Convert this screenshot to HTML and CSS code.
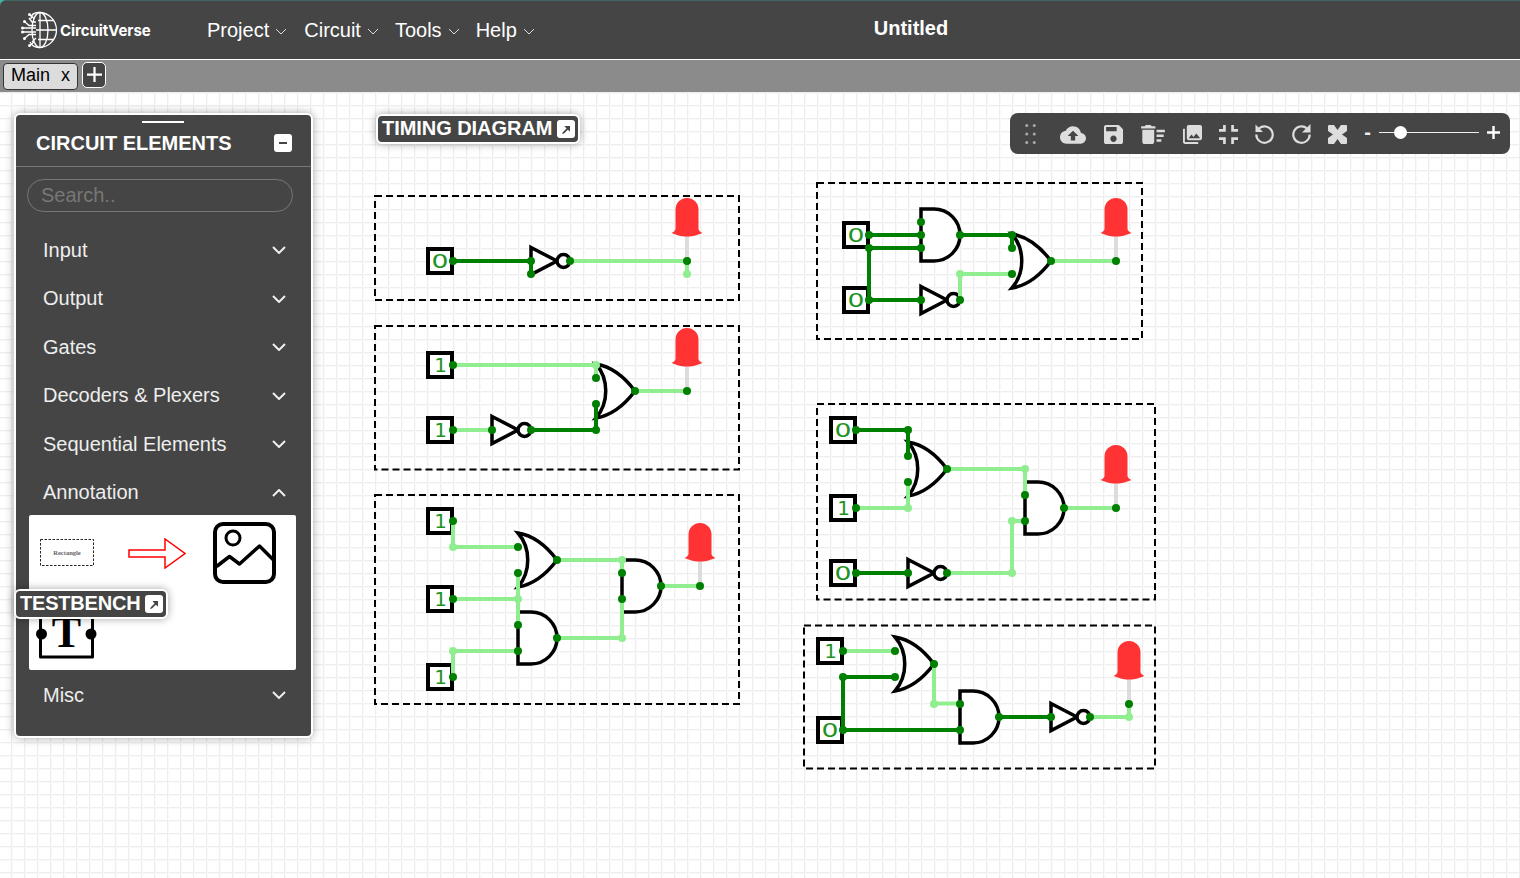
FILE: index.html
```html
<!DOCTYPE html>
<html lang="en">
<head>
<meta charset="utf-8">
<title>CircuitVerse Simulator</title>
<link rel="stylesheet" href="styles.css">
</head>
<body>
<div class="app">
  <header class="topbar">
    <div class="brand">
      <svg class="brand-mark" viewBox="0 0 37 38" aria-hidden="true">
        <g class="logo-line">
          <path d="M18 1.500A17.500 17.500 0 1 1 18 36.500"/>
          <path d="M18 1.500C10 1.500 10 6 10 8M18 36.500C12 36.500 10 33 9 31"/>
          <ellipse cx="19" cy="19" rx="8" ry="17.500"/>
          <path d="M19 1.500V36.500M17 9.500H33M15 19H36M17 28.500H33"/>
          <path d="M15 14.500H8L4 11M15 17H2M15 21H2M15 23.500H8L4 27M13 7.500L9 3.500M13 31L9 34.500M15 27L11 31M15 11H11L8 7"/>
        </g>
        <g class="logo-dot">
          <circle cx="3.500" cy="10.500" r="1.500"/><circle cx="1.500" cy="17" r="1.500"/><circle cx="1.500" cy="21" r="1.500"/><circle cx="3.500" cy="27.500" r="1.500"/><circle cx="8.500" cy="3.500" r="1.500"/><circle cx="8.500" cy="34.500" r="1.500"/>
        </g>
      </svg>
      <span class="brand-name">CircuitVerse</span>
    </div>
    <nav class="menu">
      <span class="menu-item">Project <svg class="menu-chev" viewBox="0 0 12 7"><path d="M1 1l5 5 5-5"/></svg></span>
      <span class="menu-item">Circuit <svg class="menu-chev" viewBox="0 0 12 7"><path d="M1 1l5 5 5-5"/></svg></span>
      <span class="menu-item">Tools <svg class="menu-chev" viewBox="0 0 12 7"><path d="M1 1l5 5 5-5"/></svg></span>
      <span class="menu-item">Help <svg class="menu-chev" viewBox="0 0 12 7"><path d="M1 1l5 5 5-5"/></svg></span>
    </nav>
    <div class="project-title">Untitled</div>
  </header>

  <div class="tabbar">
    <div class="tab"><span>Main</span><span>x</span></div>
    <div class="tab-add"><svg viewBox="0 0 16 16"><path d="M8 0V16M0 8H16"/></svg></div>
  </div>

  <main class="canvas">
    <svg class="board" viewBox="0 92 1520 786" aria-label="Circuit diagram">
      <defs>
        <g id="led">
          <path class="led-stem" d="M0 0V-27"/>
          <path class="led-body" d="M-11.500 -32V-51.500A11.500 11.500 0 0 1 11.500 -51.500V-32C11.500 -30.500 13.500 -29 15.500 -28C8 -25 4 -24.500 0 -24.500C-4 -24.500 -8 -25 -15.500 -28C-13.500 -29 -11.500 -30.500 -11.500 -32Z"/>
        </g>
        <g id="not-gate">
          <path class="gate" d="M0 -13.500L26 0L0 13.500Z"/>
          <circle class="gate" cx="32.500" cy="0" r="6.500"/>
        </g>
        <path id="or-gate" class="gate" d="M0 -27C18 -24 30 -12 39 0C30 12 18 24 0 27C13 12 13 -12 0 -27Z"/>
        <path id="and-gate" class="gate" d="M0 -26H13A26 26 0 0 1 13 26H0Z"/>
      </defs>

      <!-- circuit 1 -->
      <rect class="frame" x="375" y="196" width="364" height="104"/>
      <rect class="input-box" x="428" y="249" width="24" height="24"/>
      <text class="input-val" x="440" y="268" textLength="17" lengthAdjust="spacingAndGlyphs">0</text>
      <use href="#not-gate" x="531" y="261"/>
      <use href="#led" x="687" y="261"/>
      <path class="w-on" d="M453 261H531V274"/>
      <path class="w-off" d="M570 261H687V274"/>
      <g class="n-on"><circle cx="453" cy="261" r="4"/><circle cx="531" cy="261" r="4"/><circle cx="531" cy="274" r="4"/><circle cx="570" cy="261" r="4"/><circle cx="687" cy="261" r="4"/></g>
      <g class="n-off"><circle cx="687" cy="274" r="4"/></g>

      <!-- circuit 2 -->
      <rect class="frame" x="375" y="326" width="364" height="143.500"/>
      <rect class="input-box" x="428" y="353" width="24" height="24"/>
      <text class="input-val" x="440.500" y="372">1</text>
      <rect class="input-box" x="428" y="418" width="24" height="24"/>
      <text class="input-val" x="440.500" y="437">1</text>
      <use href="#not-gate" x="492" y="430"/>
      <use href="#or-gate" x="596" y="391"/>
      <use href="#led" x="687" y="391"/>
      <path class="w-off" d="M453 365H596V378M453 430H492M635 391H687"/>
      <path class="w-on" d="M531 430H596V404"/>
      <g class="n-on"><circle cx="453" cy="365" r="4"/><circle cx="453" cy="430" r="4"/><circle cx="492" cy="430" r="4"/><circle cx="531" cy="430" r="4"/><circle cx="596" cy="430" r="4"/><circle cx="596" cy="404" r="4"/><circle cx="596" cy="378" r="4"/><circle cx="635" cy="391" r="4"/><circle cx="687" cy="391" r="4"/></g>
      <g class="n-off"><circle cx="596" cy="365" r="4"/></g>

      <!-- circuit 3 -->
      <rect class="frame" x="375" y="495" width="364" height="209"/>
      <rect class="input-box" x="428" y="509" width="24" height="24"/>
      <text class="input-val" x="440.500" y="528">1</text>
      <rect class="input-box" x="428" y="587" width="24" height="24"/>
      <text class="input-val" x="440.500" y="606">1</text>
      <rect class="input-box" x="428" y="665" width="24" height="24"/>
      <text class="input-val" x="440.500" y="684">1</text>
      <use href="#or-gate" x="518" y="560"/>
      <use href="#and-gate" x="518" y="638"/>
      <use href="#and-gate" x="622" y="586"/>
      <use href="#led" x="700" y="586"/>
      <path class="w-off" d="M453 521V547H518M453 599H518M518 573V625M453 677V651H518M557 560H622V573M622 599V638H557M661 586H700"/>
      <g class="n-on"><circle cx="453" cy="521" r="4"/><circle cx="453" cy="599" r="4"/><circle cx="453" cy="677" r="4"/><circle cx="518" cy="547" r="4"/><circle cx="518" cy="573" r="4"/><circle cx="518" cy="625" r="4"/><circle cx="518" cy="651" r="4"/><circle cx="557" cy="560" r="4"/><circle cx="557" cy="638" r="4"/><circle cx="622" cy="573" r="4"/><circle cx="622" cy="599" r="4"/><circle cx="661" cy="586" r="4"/><circle cx="700" cy="586" r="4"/></g>
      <g class="n-off"><circle cx="453" cy="547" r="4"/><circle cx="453" cy="651" r="4"/><circle cx="518" cy="599" r="4"/><circle cx="622" cy="560" r="4"/><circle cx="622" cy="638" r="4"/></g>

      <!-- circuit 4 -->
      <rect class="frame" x="817" y="183" width="325" height="156"/>
      <rect class="input-box" x="844" y="223" width="24" height="24"/>
      <text class="input-val" x="856" y="242" textLength="17" lengthAdjust="spacingAndGlyphs">0</text>
      <rect class="input-box" x="844" y="288" width="24" height="24"/>
      <text class="input-val" x="856" y="307" textLength="17" lengthAdjust="spacingAndGlyphs">0</text>
      <use href="#and-gate" x="921" y="235"/>
      <use href="#not-gate" x="921" y="300"/>
      <use href="#or-gate" x="1012" y="261"/>
      <use href="#led" x="1116" y="261"/>
      <path class="w-on" d="M869 235H921M869 248H921M869 248V300H921M960 235H1012V248"/>
      <path class="w-off" d="M960 300V274H1012M1051 261H1116"/>
      <g class="n-on"><circle cx="869" cy="235" r="4"/><circle cx="869" cy="248" r="4"/><circle cx="869" cy="300" r="4"/><circle cx="921" cy="222" r="4"/><circle cx="921" cy="235" r="4"/><circle cx="921" cy="248" r="4"/><circle cx="921" cy="300" r="4"/><circle cx="960" cy="235" r="4"/><circle cx="960" cy="300" r="4"/><circle cx="1012" cy="235" r="4"/><circle cx="1012" cy="248" r="4"/><circle cx="1012" cy="274" r="4"/><circle cx="1051" cy="261" r="4"/><circle cx="1116" cy="261" r="4"/></g>
      <g class="n-off"><circle cx="960" cy="274" r="4"/></g>

      <!-- circuit 5 -->
      <rect class="frame" x="817" y="404" width="338" height="195.500"/>
      <rect class="input-box" x="831" y="418" width="24" height="24"/>
      <text class="input-val" x="843" y="437" textLength="17" lengthAdjust="spacingAndGlyphs">0</text>
      <rect class="input-box" x="831" y="496" width="24" height="24"/>
      <text class="input-val" x="843.500" y="515">1</text>
      <rect class="input-box" x="831" y="561" width="24" height="24"/>
      <text class="input-val" x="843" y="580" textLength="17" lengthAdjust="spacingAndGlyphs">0</text>
      <use href="#or-gate" x="908" y="469"/>
      <use href="#and-gate" x="1025" y="508"/>
      <use href="#not-gate" x="908" y="573"/>
      <use href="#led" x="1116" y="508"/>
      <path class="w-on" d="M856 430H908V456M856 573H908"/>
      <path class="w-off" d="M856 508H908V482M947 469H1025V495M947 573H1012V521H1025M1064 508H1116"/>
      <g class="n-on"><circle cx="856" cy="430" r="4"/><circle cx="856" cy="508" r="4"/><circle cx="856" cy="573" r="4"/><circle cx="908" cy="430" r="4"/><circle cx="908" cy="456" r="4"/><circle cx="908" cy="482" r="4"/><circle cx="908" cy="573" r="4"/><circle cx="947" cy="469" r="4"/><circle cx="947" cy="573" r="4"/><circle cx="1025" cy="495" r="4"/><circle cx="1025" cy="521" r="4"/><circle cx="1064" cy="508" r="4"/><circle cx="1116" cy="508" r="4"/></g>
      <g class="n-off"><circle cx="908" cy="508" r="4"/><circle cx="1025" cy="469" r="4"/><circle cx="1012" cy="573" r="4"/><circle cx="1012" cy="521" r="4"/></g>

      <!-- circuit 6 -->
      <rect class="frame" x="804" y="625.500" width="351" height="143"/>
      <rect class="input-box" x="818" y="639" width="24" height="24"/>
      <text class="input-val" x="830.500" y="658">1</text>
      <rect class="input-box" x="818" y="718" width="24" height="24"/>
      <text class="input-val" x="830" y="737" textLength="17" lengthAdjust="spacingAndGlyphs">0</text>
      <use href="#or-gate" x="895" y="664"/>
      <use href="#and-gate" x="960" y="717"/>
      <use href="#not-gate" x="1051" y="717"/>
      <use href="#led" x="1129" y="704"/>
      <path class="w-on" d="M895 677H843V730H960M999 717H1051"/>
      <path class="w-off" d="M843 651H895M934 664V703.500H960M1090 717H1129V704"/>
      <g class="n-on"><circle cx="843" cy="651" r="4"/><circle cx="843" cy="677" r="4"/><circle cx="843" cy="730" r="4"/><circle cx="895" cy="651" r="4"/><circle cx="895" cy="677" r="4"/><circle cx="934" cy="664" r="4"/><circle cx="960" cy="704" r="4"/><circle cx="960" cy="730" r="4"/><circle cx="999" cy="717" r="4"/><circle cx="1051" cy="717" r="4"/><circle cx="1090" cy="717" r="4"/><circle cx="1129" cy="704" r="4"/></g>
      <g class="n-off"><circle cx="934" cy="704" r="4"/><circle cx="1129" cy="717" r="4"/></g>
    </svg>

    <aside class="elements-panel">
      <div class="drag-handle"></div>
      <div class="panel-head">
        <span class="panel-title">CIRCUIT ELEMENTS</span>
        <span class="minimize"></span>
      </div>
      <div class="search">Search..</div>
      <div class="row"><span>Input</span><svg class="chev" viewBox="0 0 14 8"><path d="M1 1l6 6 6-6"/></svg></div>
      <div class="row"><span>Output</span><svg class="chev" viewBox="0 0 14 8"><path d="M1 1l6 6 6-6"/></svg></div>
      <div class="row"><span>Gates</span><svg class="chev" viewBox="0 0 14 8"><path d="M1 1l6 6 6-6"/></svg></div>
      <div class="row"><span>Decoders &amp; Plexers</span><svg class="chev" viewBox="0 0 14 8"><path d="M1 1l6 6 6-6"/></svg></div>
      <div class="row"><span>Sequential Elements</span><svg class="chev" viewBox="0 0 14 8"><path d="M1 1l6 6 6-6"/></svg></div>
      <div class="row"><span>Annotation</span><svg class="chev" viewBox="0 0 14 8"><path d="M1 7l6-6 6 6"/></svg></div>
      <div class="annotation-grid">
        <svg class="ann-rect" viewBox="0 0 54 27">
          <rect class="ann-dash" x="0.500" y="0.500" width="53" height="26"/>
          <text class="ann-label" x="27" y="15.500">Rectangle</text>
        </svg>
        <svg class="ann-arrow" viewBox="0 0 58 31">
          <path class="ann-red" d="M1 12H37V1L57 15.500L37 30V19H1Z"/>
        </svg>
        <svg class="ann-image" viewBox="0 0 63 62">
          <rect class="ann-black" x="2" y="2" width="59" height="58" rx="8"/>
          <circle class="ann-black ann-thin" cx="20" cy="16" r="7"/>
          <path class="ann-black ann-mid" d="M3.500 44.500L16.500 34.500L26.500 42L46.500 24L60.500 38"/>
        </svg>
        <svg class="ann-text" viewBox="0 0 56 54">
          <path class="ann-black ann-thin" d="M2.500 0V52H54.500V0"/>
          <circle cx="3.500" cy="29" r="5.500"/><circle cx="53" cy="29" r="5.500"/>
          <text class="ann-t" x="28.500" y="42">T</text>
        </svg>
      </div>
      <div class="row row-last"><span>Misc</span><svg class="chev" viewBox="0 0 14 8"><path d="M1 1l6 6 6-6"/></svg></div>
    </aside>

    <div class="chip chip-timing">
      <span>TIMING DIAGRAM</span>
      <svg class="chip-icon" viewBox="0 0 18 18"><rect width="18" height="18" rx="3"/><path d="M5 14L6 12L9.500 8.500L7.500 6H13V11.500L10.800 9.800L7 13.500Z"/></svg>
    </div>
    <div class="chip chip-testbench">
      <span>TESTBENCH</span>
      <svg class="chip-icon" viewBox="0 0 18 18"><rect width="18" height="18" rx="3"/><path d="M5 14L6 12L9.500 8.500L7.500 6H13V11.500L10.800 9.800L7 13.500Z"/></svg>
    </div>

    <div class="toolbar">
      <svg class="grip" viewBox="0 0 10 20"><circle cx="1.500" cy="1.500" r="1.500"/><circle cx="9" cy="1.500" r="1.500"/><circle cx="1.500" cy="10" r="1.500"/><circle cx="9" cy="10" r="1.500"/><circle cx="1.500" cy="18.500" r="1.500"/><circle cx="9" cy="18.500" r="1.500"/></svg>
      <svg class="tool tool-cloud" viewBox="0 4 24 16"><path d="M19.350 10.040C18.670 6.590 15.640 4 12 4 9.110 4 6.600 5.640 5.350 8.040 2.340 8.360 0 10.910 0 14c0 3.310 2.690 6 6 6h13c2.760 0 5-2.240 5-5 0-2.640-2.050-4.780-4.650-4.960zM14 13v4h-4v-4H7l5-5 5 5h-3z"/></svg>
      <svg class="tool tool-19" viewBox="3 3 18 18"><path d="M17 3H5c-1.110 0-2 .9-2 2v14c0 1.100.89 2 2 2h14c1.100 0 2-.9 2-2V7l-4-4zm-5 16c-1.660 0-3-1.340-3-3s1.340-3 3-3 3 1.340 3 3-1.340 3-3 3zm3-10H5V5h10v4z"/></svg>
      <svg class="tool tool-sweep" viewBox="2 4 20 16"><path d="M15 16h4v2h-4zm0-8h7v2h-7zm0 4h6v2h-6zM3 18c0 1.100.9 2 2 2h6c1.100 0 2-.9 2-2V8H3v10zM14 5h-3l-1-1H6L5 5H2v2h12z"/></svg>
      <svg class="tool tool-19" viewBox="2 2 20 20"><path d="M22 16V4c0-1.100-.9-2-2-2H8c-1.100 0-2 .9-2 2v12c0 1.100.9 2 2 2h12c1.100 0 2-.9 2-2zm-11-4l2.030 2.710L16 11l4 5H8l3-4zM2 6v14c0 1.100.9 2 2 2h14v-2H4V6H2z"/></svg>
      <svg class="tool tool-19" viewBox="5 5 14 14"><path d="M5 16h3v3h2v-5H5v2zm3-8H5v2h5V5H8v3zm6 11h2v-3h3v-2h-5v5zm2-11V5h-2v5h5V8h-3z"/></svg>
      <svg class="tool tool-19 tool-tall" viewBox="0 0 19 20"><path class="ring" d="M4 4.500A8.200 8.200 0 1 1 1.300 10.500"/><path d="M0.500 0.500V8H8Z"/></svg>
      <svg class="tool tool-20 tool-tall" viewBox="0 0 20 20"><path class="ring" d="M16 4.500A8.200 8.200 0 1 0 18.700 10.500"/><path d="M19.500 0V8.500H11Z"/></svg>
      <svg class="tool tool-19" viewBox="0 0 19 19"><rect width="19" height="19" rx="1"/><path class="fit-notch" d="M6 0H13L9.500 5ZM6 19H13L9.500 14ZM0 6V13L5 9.500ZM19 6V13L14 9.500Z"/></svg>
      <span class="zoom-minus">-</span>
      <div class="slider"><span class="slider-thumb"></span></div>
      <svg class="zoom-plus" viewBox="0 0 13 13"><path d="M6.500 0V13M0 6.500H13"/></svg>
    </div>
  </main>
</div>
</body>
</html>
```

FILE: styles.css
```css
* { box-sizing: border-box; }

html, body {
  margin: 0;
  height: 100%;
  overflow: hidden;
}

body {
  font-family: "Liberation Sans", Arial, sans-serif;
  background: #42b8a4;
}

.app {
  display: flex;
  flex-direction: column;
  height: 878px;
}

/* header */
.topbar {
  display: flex;
  align-items: center;
  flex: none;
  height: 60px;
  padding-left: 21px;
  background: #454545;
  border-top: 1px solid #3f6663;
  border-bottom: 1px solid #fff;
  border-top-left-radius: 6px;
  color: #fff;
}

.brand {
  display: flex;
  align-items: center;
  gap: 2px;
}

.brand-mark {
  width: 37px;
  height: 38px;
}

.logo-line {
  fill: none;
  stroke: #fff;
  stroke-width: 1.3;
}

.logo-dot { fill: #fff; }

.brand-name {
  width: 91px;
  font-family: Inter, "Liberation Sans", sans-serif;
  font-size: 15px;
  font-weight: 700;
  letter-spacing: -0.05px;
  white-space: nowrap;
}

.menu {
  display: flex;
  gap: 16px;
  margin-left: 56px;
  font-size: 20px;
}

.menu-item {
  display: flex;
  align-items: center;
  gap: 6px;
}

.menu-item:first-child { margin-right: 1px; }

.menu-chev {
  width: 12px;
  height: 7px;
  margin-top: 3px;
  fill: none;
  stroke: #ddd;
  stroke-width: 1;
}

.project-title {
  margin: -3px 0 0 339px;
  font-size: 20px;
  font-weight: 700;
}

/* tabs */
.tabbar {
  display: flex;
  flex: none;
  align-items: flex-start;
  gap: 4px;
  height: 32px;
  padding: 2px 0 0 3px;
  background: #8b8b8b;
}

.tab {
  display: flex;
  justify-content: space-between;
  align-items: center;
  width: 75px;
  height: 27px;
  margin-top: 1px;
  padding: 0 7px 3px 7px;
  background: #dcdcdc;
  border: 1px solid #333;
  border-radius: 4px;
  font-size: 18px;
  color: #000;
}

.tab-add {
  display: flex;
  align-items: center;
  justify-content: center;
  width: 24px;
  height: 26px;
  padding-bottom: 2px;
  background: #454545;
  border: 1px solid #fff;
  border-radius: 5px;
}

.tab-add svg {
  width: 15px;
  height: 15px;
  fill: none;
  stroke: #fff;
  stroke-width: 2.4;
}

/* canvas */
.canvas {
  position: relative;
  flex: 1;
  background-color: #fff;
  background-image:
    linear-gradient(to right, #eee 0, #eee 1px, #f9f9f9 1px, #f9f9f9 2px, transparent 2px),
    linear-gradient(to bottom, #eee 0, #eee 1px, #f9f9f9 1px, #f9f9f9 2px, transparent 2px);
  background-size: 13px 13px;
  background-position: 11px 0;
}

.board {
  position: absolute;
  inset: 0;
  width: 1520px;
  height: 786px;
}

.frame {
  fill: none;
  stroke: #000;
  stroke-width: 2;
  stroke-dasharray: 7 4;
}

.gate {
  fill: #fff;
  stroke: #000;
  stroke-width: 3.5;
  stroke-linejoin: miter;
}

.input-box {
  fill: #fff;
  stroke: #000;
  stroke-width: 4;
}

.input-val {
  fill: #1f931f;
  font-family: "DejaVu Sans", sans-serif;
  font-size: 20px;
  text-anchor: middle;
}

.w-on, .w-off {
  fill: none;
  stroke-width: 4;
}

.w-on { stroke: #008000; }
.w-off { stroke: #90ee90; }
.n-on { fill: #008000; }
.n-off { fill: #90ee90; }

.led-stem {
  fill: none;
  stroke: #dcdcdc;
  stroke-width: 4;
}

.led-body { fill: #ff3333; }

/* elements panel */
.elements-panel {
  position: absolute;
  top: 21px;
  left: 14px;
  width: 299px;
  height: 625px;
  background: #454545;
  border: 2px solid #fff;
  border-radius: 6px;
  box-shadow: 0 0 10px rgba(0, 0, 0, 0.35);
  color: #eee;
}

.drag-handle {
  position: absolute;
  top: 6px;
  left: 126px;
  width: 42px;
  height: 2px;
  background: #fff;
}

.panel-head {
  display: flex;
  align-items: center;
  justify-content: space-between;
  height: 52px;
  padding: 6px 19px 0 20px;
  border-bottom: 1px solid #777;
}

.panel-title {
  font-size: 20px;
  font-weight: 700;
  color: #fff;
}

.minimize {
  display: flex;
  align-items: center;
  justify-content: center;
  width: 18px;
  height: 18px;
  margin-top: -2px;
  background: #fff;
  border-radius: 3px;
}

.minimize::before {
  content: "";
  width: 8px;
  height: 2px;
  background: #454545;
}

.search {
  display: flex;
  align-items: center;
  height: 33px;
  margin: 12px 18px 14px 11px;
  padding-left: 13px;
  border: 1px solid #777;
  border-radius: 17px;
  font-size: 20px;
  color: #777;
}

.row {
  display: flex;
  align-items: center;
  justify-content: space-between;
  height: 48.5px;
  padding: 0 25px 0 27px;
  font-size: 20px;
}

.row-last { margin-top: 1px; }

.chev {
  width: 14px;
  height: 8px;
  fill: none;
  stroke: #eee;
  stroke-width: 2;
}

.annotation-grid {
  display: grid;
  grid-template-columns: 88px 85px 1fr;
  grid-template-rows: 62px 54px;
  row-gap: 21px;
  align-items: center;
  justify-items: start;
  width: 267px;
  height: 155px;
  margin: -2px 0 0 13px;
  padding: 7px 0 0 11px;
  background: #fff;
  border-radius: 2px;
}

.ann-rect { width: 54px; height: 27px; margin-top: -2px; }
.ann-arrow { width: 58px; height: 31px; }
.ann-image { width: 63px; height: 62px; }

.ann-text {
  width: 56px;
  height: 54px;
  margin-left: -2px;
  grid-column: 1;
  overflow: visible;
}

.ann-dash {
  fill: none;
  stroke: #222;
  stroke-width: 1;
  stroke-dasharray: 2.500 1.500;
}

.ann-label {
  fill: #666;
  font-family: "Liberation Serif", serif;
  font-size: 6.500px;
  font-weight: 700;
  text-anchor: middle;
}

.ann-red {
  fill: #fff;
  stroke: #ff0000;
  stroke-width: 1.500;
}

.ann-black {
  fill: none;
  stroke: #000;
  stroke-width: 4;
  stroke-linejoin: round;
}

.ann-thin { stroke-width: 3; }
.ann-mid { stroke-width: 3.500; }

.ann-t {
  fill: #000;
  font-family: "Liberation Serif", serif;
  font-size: 44px;
  font-weight: 700;
  text-anchor: middle;
}

/* floating chips */
.chip {
  position: absolute;
  display: flex;
  align-items: center;
  gap: 5px;
  height: 30px;
  padding: 0 3px 0 4px;
  background: #454545;
  border: 2px solid #fff;
  border-radius: 6px;
  box-shadow: 0 0 8px rgba(0, 0, 0, 0.35);
  font-size: 20px;
  font-weight: 700;
  color: #fff;
}

.chip-timing { top: 21.500px; left: 376px; letter-spacing: -0.05px; }
.chip-testbench { top: 496.500px; left: 14px; letter-spacing: -0.2px; }

.chip-icon {
  width: 18px;
  height: 18px;
  fill: #fff;
}

.chip-icon path { fill: #454545; }

/* toolbar */
.toolbar {
  position: absolute;
  top: 21px;
  left: 1010px;
  display: flex;
  align-items: center;
  gap: 17px;
  width: 500px;
  height: 41px;
  padding: 0 0 0 15px;
  background: #454545;
  border-radius: 8px;
}

.grip {
  width: 10.500px;
  height: 20px;
  margin-right: 7px;
  fill: #aaa;
}

.tool { fill: #ddd; }
.tool-cloud { width: 26px; height: 18px; margin: 2px 1px 0 0; }
.tool-19 { width: 19px; height: 19px; margin-top: 1px; }
.tool-sweep { width: 26px; height: 19px; margin-top: 1px; }
.tool-20 { width: 20px; }
.tool-tall { height: 20px; margin-top: 0; }
.fit-notch { fill: #454545; }

.ring {
  fill: none;
  stroke: #ddd;
  stroke-width: 2.200;
}

.zoom-minus {
  width: 8px;
  margin: -3px -10px 0 0;
  font-size: 20px;
  font-weight: 700;
  color: #eee;
  text-align: center;
}

.slider {
  position: relative;
  width: 100px;
  height: 1px;
  margin-top: -2px;
  background: #eee;
}

.slider-thumb {
  position: absolute;
  top: -6px;
  left: 15px;
  width: 13px;
  height: 13px;
  background: #fff;
  border-radius: 50%;
}

.zoom-plus {
  width: 13px;
  height: 13px;
  margin: -3px 0 0 -9px;
  fill: none;
  stroke: #fff;
  stroke-width: 2.400;
}
```
